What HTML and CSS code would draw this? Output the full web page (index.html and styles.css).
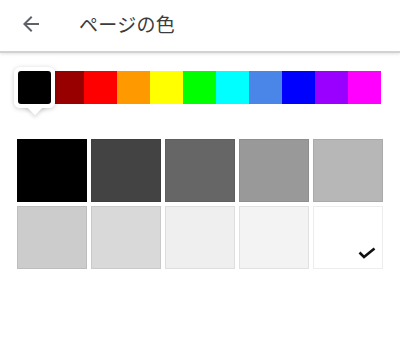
FILE: index.html
```html
<!DOCTYPE html>
<html lang="ja">
<head>
<meta charset="utf-8">
<title>ページの色</title>
<link rel="stylesheet" href="styles.css">
</head>
<body>
<header class="appbar">
  <button class="back" aria-label="戻る">
    <svg viewBox="0 0 24 24" width="24" height="24"><path d="M20 11H7.83l5.59-5.59L12 4l-8 8 8 8 1.41-1.41L7.83 13H20v-2z"/></svg>
  </button>
  <h1 class="title">ページの色</h1>
</header>
<main class="content">
  <div class="strip">
    <div class="swatch selected"><span class="bubble"></span><span class="tip"></span><span class="cover"></span><span class="fill c-black"></span></div>
    <div class="swatch c-darkred"></div>
    <div class="swatch c-red"></div>
    <div class="swatch c-orange"></div>
    <div class="swatch c-yellow"></div>
    <div class="swatch c-green"></div>
    <div class="swatch c-cyan"></div>
    <div class="swatch c-cornflower"></div>
    <div class="swatch c-blue"></div>
    <div class="swatch c-purple"></div>
    <div class="swatch c-magenta"></div>
  </div>
  <div class="grid">
    <div class="tile g0"></div>
    <div class="tile g1"></div>
    <div class="tile g2"></div>
    <div class="tile g3"></div>
    <div class="tile g4"></div>
    <div class="tile g5"></div>
    <div class="tile g6"></div>
    <div class="tile g7"></div>
    <div class="tile g8"></div>
    <div class="tile g9 checked">
      <svg class="check" viewBox="0 0 18 12" width="18" height="12"><polyline points="1.5,5.5 6,10 16.5,1.5" fill="none" stroke="#111" stroke-width="2.6"/></svg>
    </div>
  </div>
</main>
</body>
</html>
```
FILE: styles.css
```css
* { box-sizing: border-box; }
html, body { margin: 0; padding: 0; background: #fff; }
body {
  font-family: "Noto Sans CJK JP", Roboto, "Noto Sans", sans-serif;
  width: 400px;
  height: 338px;
  overflow: hidden;
}
.appbar {
  height: 53px;
  display: flex;
  align-items: center;
  border-bottom: 2px solid #d2d2d2;
  box-shadow: 0 1px 3px rgba(0, 0, 0, 0.12);
  padding-bottom: 4px;
}
.back {
  border: 0;
  background: none;
  padding: 0;
  margin-left: 19px;
  width: 24px;
  height: 24px;
  display: flex;
  fill: #5f6368;
}
.back svg { width: 24px; height: 24px; }
.title {
  margin: 0 0 0 36px;
  font-size: 19px;
  font-weight: 400;
  color: #3c3c3c;
  letter-spacing: 0.3px;
}
.content { padding: 18px 0 0 0; }
.strip {
  display: flex;
  margin-left: 18px;
  height: 33px;
}
.swatch {
  width: 33px;
  height: 33px;
  flex: none;
}
.swatch.selected { position: relative; z-index: 1; }
.bubble {
  position: absolute;
  left: -4px;
  top: -4px;
  right: -4px;
  bottom: -4px;
  background: #fff;
  border-radius: 6px;
  box-shadow: 0 1px 5px rgba(0, 0, 0, 0.2);
}
.tip {
  position: absolute;
  left: 9px;
  top: 25px;
  width: 16px;
  height: 16px;
  background: #fff;
  transform: rotate(45deg);
  box-shadow: 2px 2px 4px rgba(0, 0, 0, 0.12);
}
.cover {
  position: absolute;
  left: -4px;
  right: -4px;
  top: 0;
  bottom: -4px;
  background: #fff;
  border-radius: 0 0 6px 6px;
}
.fill {
  position: absolute;
  inset: 0;
  border-radius: 3px;
}
.c-black { background: #000; }
.c-darkred { background: #980000; }
.c-red { background: #ff0000; }
.c-orange { background: #ff9900; }
.c-yellow { background: #ffff00; }
.c-green { background: #00ff00; }
.c-cyan { background: #00ffff; }
.c-cornflower { background: #4a86e8; }
.c-blue { background: #0000ff; }
.c-purple { background: #9900ff; }
.c-magenta { background: #ff00ff; }
.grid {
  display: grid;
  grid-template-columns: repeat(5, 70px);
  grid-auto-rows: 63px;
  gap: 4px;
  margin: 35px 0 0 17px;
}
.tile {
  border: 1px solid rgba(0, 0, 0, 0.07);
  position: relative;
}
.g0 { background: #000; }
.g1 { background: #434343; }
.g2 { background: #666666; }
.g3 { background: #999999; }
.g4 { background: #b7b7b7; }
.g5 { background: #cccccc; }
.g6 { background: #d9d9d9; }
.g7 { background: #efefef; }
.g8 { background: #f3f3f3; }
.g9 { background: #ffffff; }
.check {
  position: absolute;
  left: 44px;
  top: 40px;
}
```
